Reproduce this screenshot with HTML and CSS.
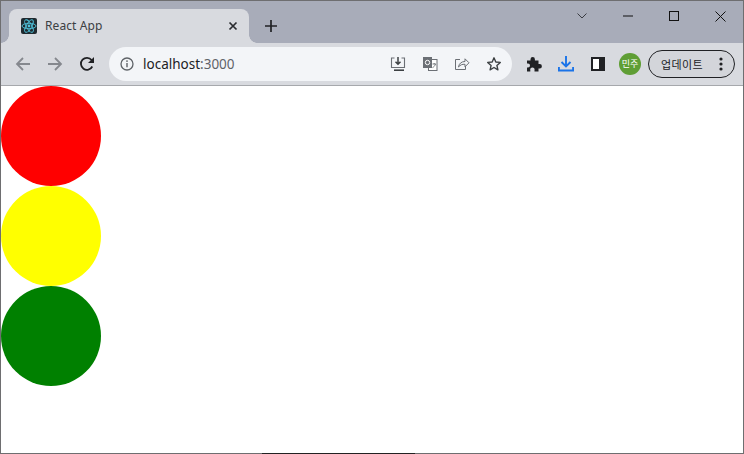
FILE: index.html
```html
<!DOCTYPE html>
<html lang="ko">
<head>
<meta charset="utf-8">
<title>React App</title>
<link rel="stylesheet" href="styles.css">
</head>
<body>
<div class="window">
  <header class="titlebar">
    <div class="tab">
      <svg class="favicon" width="16" height="16" viewBox="0 0 16 16">
        <rect width="16" height="16" rx="2" fill="#1f2a30"/>
        <g fill="none" stroke="#4fc3dc" stroke-width="0.9">
          <ellipse cx="8" cy="8" rx="7" ry="2.7"/>
          <ellipse cx="8" cy="8" rx="7" ry="2.7" transform="rotate(60 8 8)"/>
          <ellipse cx="8" cy="8" rx="7" ry="2.7" transform="rotate(120 8 8)"/>
        </g>
        <circle cx="8" cy="8" r="1.4" fill="#4fc3dc"/>
      </svg>
      <span class="tab-title">React App</span>
      <svg class="tab-close" width="10" height="10" viewBox="0 0 10 10"><path d="M1.5 1.5l7 7M8.500 1.500l-7 7" stroke="#2a2c30" stroke-width="1.7" fill="none"/></svg>
    </div>
    <svg class="new-tab" width="12" height="12" viewBox="0 0 12 12"><path d="M6 0v12M0 6h12" stroke="#202124" stroke-width="1.7" fill="none"/></svg>
    <div class="win-controls">
      <span class="win-btn"><svg width="10" height="6" viewBox="0 0 10 6"><path d="M.5.5L5 5 9.500.5" stroke="#3a3c42" fill="none"/></svg></span>
      <span class="win-btn"><svg width="10" height="2" viewBox="0 0 10 2"><path d="M0 1h10" stroke="#111" fill="none"/></svg></span>
      <span class="win-btn"><svg width="10" height="10" viewBox="0 0 10 10"><rect x=".5" y=".5" width="9" height="9" stroke="#111" fill="none"/></svg></span>
      <span class="win-btn"><svg width="11" height="11" viewBox="0 0 11 11"><path d="M.5.5l10 10M10.500.5l-10 10" stroke="#111" fill="none"/></svg></span>
    </div>
  </header>

  <nav class="toolbar">
    <div class="nav-btns">
      <svg width="16" height="16" viewBox="0 0 16 16"><path d="M15 8H2M8 2L2 8l6 6" stroke="#85888e" stroke-width="1.8" fill="none"/></svg>
      <svg width="16" height="16" viewBox="0 0 16 16"><path d="M1 8h13M8 2l6 6-6 6" stroke="#85888e" stroke-width="1.8" fill="none"/></svg>
      <svg width="16" height="16" viewBox="0 0 16 16"><path d="M13.300 10.500A6 6 0 1 1 12.600 4L14.500 6" stroke="#202124" stroke-width="1.800" fill="none"/><path d="M15 1v6H9z" fill="#202124"/></svg>
    </div>
    <div class="omnibox">
      <svg class="info" width="14" height="14" viewBox="0 0 14 14"><circle cx="7" cy="7" r="6" stroke="#5f6368" stroke-width="1.300" fill="none"/><path d="M7 6v4.200" stroke="#5f6368" stroke-width="1.400"/><circle cx="7" cy="4.100" r=".9" fill="#5f6368"/></svg>
      <span class="url">localhost<span class="port">:3000</span></span>
      <div class="omni-icons">
        <svg width="16" height="16" viewBox="0 0 16 16"><path d="M4.500 2H1.500v9.500h13V2H11.500" stroke="#6b6f75" stroke-width="1.100" fill="none"/><path d="M8 1v7M5.500 5.800L8 8.300l2.500-2.500" stroke="#3c4043" stroke-width="1.500" fill="none"/><path d="M4 14.200h10" stroke="#3c4043" stroke-width="1.600"/></svg>
        <svg width="16" height="16" viewBox="0 0 16 16"><rect x="6.500" y="3.500" width="8.500" height="11" fill="#fff" stroke="#6b6f75"/><rect x="1" y="1" width="9" height="11" fill="#6b6f75"/><circle cx="5.500" cy="6.500" r="2.200" fill="none" stroke="#fff"/><path d="M10.500 8h3.500M12.200 7v1M13.500 8c-.6 2-1.800 3-3 3.600" stroke="#6b6f75" fill="none" stroke-width=".9"/></svg>
        <svg width="16" height="16" viewBox="0 0 16 16"><path d="M6 3.500H1.500v10h10V10" stroke="#6b6f75" stroke-width="1" fill="none"/><path d="M4.500 11c.5-3.500 3-5.500 6.500-5.500V2.800l4 4-4 4V8.300c-2.800-.3-4.800.7-6.500 2.700z" stroke="#6b6f75" stroke-width="1" fill="none"/></svg>
        <svg width="16" height="16" viewBox="0 0 16 16"><path d="M8 1.800l1.800 4.200 4.500.4-3.400 3 1 4.400L8 11.500l-3.900 2.300 1-4.400-3.400-3 4.500-.4z" stroke="#3c4043" stroke-width="1.400" fill="none" stroke-linejoin="round"/></svg>
      </div>
    </div>
    <div class="tools">
      <svg class="t-ext" width="16" height="16" viewBox="0 0 16 16"><path d="M1 4.500h3.500V3.300a2.200 2.200 0 1 1 4.400 0V4.500h3.600V8h1.200a2.200 2.200 0 1 1 0 4.400h-1.200V15.500H8.500v-1.200a2.200 2.200 0 1 0-4.200 0V15.500H1V11.500h1a2 2 0 1 0 0-4H1z" fill="#202124"/></svg>
      <svg class="t-down" width="16" height="16" viewBox="0 0 16 16"><path d="M8 0v10M3.500 6L8 10.500 12.500 6" stroke="#1a73e8" stroke-width="1.900" fill="none"/><path d="M.9 11v3.500h14.200V11" stroke="#1a73e8" stroke-width="1.900" fill="none"/></svg>
      <svg class="t-side" width="14" height="14" viewBox="0 0 14 14"><rect x="1" y="1" width="12" height="12" fill="#fff" stroke="#202124" stroke-width="2"/><rect x="8" y="1" width="5" height="12" fill="#202124"/></svg>
      <span class="avatar">민주</span>
      <div class="update">
        <span class="update-label">업데이트</span>
        <svg width="4" height="14" viewBox="0 0 4 14"><circle cx="2" cy="2" r="1.600" fill="#202124"/><circle cx="2" cy="7" r="1.600" fill="#202124"/><circle cx="2" cy="12" r="1.600" fill="#202124"/></svg>
      </div>
    </div>
  </nav>

  <main class="page">
    <div class="light red"></div>
    <div class="light yellow"></div>
    <div class="light green"></div>
  </main>
  <div class="taskbar-peek"></div>
</div>
</body>
</html>
```

FILE: styles.css
```css
* { box-sizing: border-box; }
html, body { margin: 0; padding: 0; }
body { width: 744px; height: 454px; overflow: hidden; background: #fff; }

.window {
  position: relative;
  width: 744px;
  height: 454px;
  display: flex;
  flex-direction: column;
  border: 1px solid #6e6e70;
  font-family: "Noto Sans", "Noto Sans CJK KR", sans-serif;
}

.titlebar {
  height: 42px;
  flex: none;
  display: flex;
  align-items: flex-end;
  padding-left: 8px;
  background: #a8acb9;
}

.tab {
  position: relative;
  width: 240px;
  height: 34px;
  display: flex;
  align-items: center;
  padding: 0 11px 0 12px;
  background: #d8dadf;
  border-radius: 8px 8px 0 0;
}
.tab::before, .tab::after {
  content: "";
  position: absolute;
  bottom: 0;
  width: 8px;
  height: 8px;
  background: radial-gradient(circle at 0 0, transparent 7.5px, #d8dadf 8px);
}
.tab::before { left: -8px; }
.tab::after { right: -8px; transform: scaleX(-1); }

.favicon { flex: none; }
.tab-title {
  flex: 1;
  margin-left: 8px;
  font-size: 12px;
  line-height: 16px;
  color: #3c4043;
  letter-spacing: .1px;
}
.tab-close { flex: none; }

.new-tab { flex: none; margin: 0 0 11px 16px; }

.win-controls {
  margin-left: auto;
  align-self: flex-start;
  display: flex;
}
.win-btn {
  width: 46px;
  height: 30px;
  display: flex;
  align-items: center;
  justify-content: center;
}

.toolbar {
  height: 43px;
  flex: none;
  display: flex;
  align-items: center;
  padding: 0 8px 1px 14px;
  background: #d8dadf;
  border-bottom: 1px solid #a6a8ac;
}

.nav-btns {
  display: flex;
  gap: 16px;
  flex: none;
  width: 94px;
}

.omnibox {
  width: 403px;
  height: 34px;
  flex: none;
  display: flex;
  align-items: center;
  padding: 0 10px 0 11px;
  background: #f3f5f8;
  border-radius: 17px;
}
.info { flex: none; }
.url {
  margin-left: 9px;
  font-size: 13.500px;
  color: #202124;
}
.port { color: #5f6368; }
.omni-icons {
  margin-left: auto;
  display: flex;
  gap: 16px;
}

.tools {
  display: flex;
  align-items: center;
  flex: 1;
  padding-left: 14px;
}
.t-down { margin-left: 16px; }
.t-side { margin-left: 17px; }

.avatar {
  margin-left: 14px;
  width: 22px;
  height: 22px;
  flex: none;
  border-radius: 50%;
  background: #5f9e35;
  color: #fff;
  font-size: 9px;
  line-height: 22px;
  text-align: center;
  font-family: "Noto Sans CJK KR", sans-serif;
}

.update {
  margin-left: 7px;
  width: 87px;
  height: 28px;
  flex: none;
  display: flex;
  align-items: center;
  justify-content: space-between;
  padding: 0 11px 0 12px;
  background: #d3d5da;
  border: 1px solid #202124;
  border-radius: 14px;
}
.update-label {
  font-family: "Noto Sans CJK KR", sans-serif;
  font-size: 11px;
  letter-spacing: .4px;
  color: #202124;
}

.page {
  flex: 1;
  background: #fff;
}
.light {
  width: 100px;
  height: 100px;
  border-radius: 50%;
}
.red { background: #f00; }
.yellow { background: #ff0; }
.green { background: #008000; }

.taskbar-peek {
  position: absolute;
  left: 261px;
  bottom: -1px;
  width: 153px;
  height: 1px;
  background: #222;
}
```
